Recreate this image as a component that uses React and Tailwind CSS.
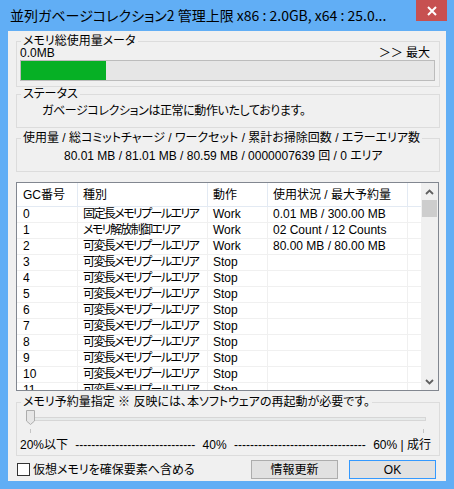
import React from 'react'

const rows = [
  ['0', '固定長メモリプールエリア', 'Work', '0.01 MB / 300.00 MB'],
  ['1', 'メモリ解放制御エリア', 'Work', '02 Count / 12 Counts'],
  ['2', '可変長メモリプールエリア', 'Work', '80.00 MB / 80.00 MB'],
  ['3', '可変長メモリプールエリア', 'Stop', ''],
  ['4', '可変長メモリプールエリア', 'Stop', ''],
  ['5', '可変長メモリプールエリア', 'Stop', ''],
  ['6', '可変長メモリプールエリア', 'Stop', ''],
  ['7', '可変長メモリプールエリア', 'Stop', ''],
  ['8', '可変長メモリプールエリア', 'Stop', ''],
  ['9', '可変長メモリプールエリア', 'Stop', ''],
  ['10', '可変長メモリプールエリア', 'Stop', ''],
  ['11', '可変長メモリプールエリア', 'Stop', ''],
]

function Legend({ children }) {
  return <legend className="ml-[4px] px-[2px] text-[12px] leading-[12px] text-black">{children}</legend>
}

function Chevron({ up }) {
  return (
    <svg width="9" height="6" viewBox="0 0 9 6">
      <path d={up ? 'M1 5 L4.5 1.5 L8 5' : 'M1 1 L4.5 4.5 L8 1'} fill="none" stroke="#606060" strokeWidth="1.8" />
    </svg>
  )
}

export default function App() {
  return (
    <div className="w-[454px] h-[489px] bg-[#61aef5] flex flex-col overflow-hidden font-['Liberation_Sans','Noto_Sans_CJK_JP',sans-serif] [font-feature-settings:'palt'] text-black">
      {/* title bar */}
      <div className="h-[31px] flex items-start shrink-0">
        <div className="pl-[10px] pt-[5px] text-[14px] leading-[20px] whitespace-nowrap font-['Noto_Sans_CJK_JP',sans-serif]">
          並列ガベージコレクション2 管理上限 x86 : 2.0GB, x64 : 25.0...
        </div>
        <div className="ml-auto mr-[7px] w-[31px] h-[21px] bg-[#c75050] flex items-center justify-center shrink-0">
          <svg width="10" height="10" viewBox="0 0 10 10">
            <path d="M1 1 L9 9 M9 1 L1 9" stroke="#fff" strokeWidth="2" />
          </svg>
        </div>
      </div>

      {/* client */}
      <div className="mx-[8px] mb-[8px] flex-1 min-w-0 bg-[#f0f0f0] flex flex-col pl-[8px] pr-[6px]">
        <fieldset className="mt-[4px] min-w-0 border border-[#dcdcdc] pb-[5px]">
          <Legend>メモリ総使用量メータ</Legend>
          <div className="h-[13px] flex justify-between items-center text-[12px] leading-[13px] pl-[3px] pr-[9px]">
            <span>0.0MB</span>
            <span>＞＞ 最大</span>
          </div>
          <div className="ml-[3px] mr-[4px] h-[21px] border border-[#bcbcbc] bg-[#e6e6e6]">
            <div className="h-full w-[85px] bg-[#06b025]" />
          </div>
        </fieldset>

        <fieldset className="mt-[1px] min-w-0 border border-[#dcdcdc] pb-[9px]">
          <Legend>ステータス</Legend>
          <div className="mt-[4px] pl-[25px] text-[12px] leading-[14px] tracking-[-0.4px]">ガベージコレクションは正常に動作いたしております。</div>
        </fieldset>

        <fieldset className="mt-[4px] min-w-0 border border-[#dcdcdc] pb-[8px]">
          <Legend>使用量 / 総コミットチャージ / ワークセット / 累計お掃除回数 / エラーエリア数</Legend>
          <div className="mt-[5px] pl-[47px] text-[12px] leading-[14px] whitespace-nowrap">
            80.01 MB / 81.01 MB / 80.59 MB / 0000007639 回 / 0 エリア
          </div>
        </fieldset>

        {/* list view */}
        <div className="mt-[10px] mr-[1px] h-[209px] border border-[#828790] bg-white flex overflow-hidden">
          <div className="flex-1 min-w-0 flex flex-col overflow-hidden text-[12px]">
            <div className="h-[24px] shrink-0 flex border-b border-[#e3eaf3]">
              <div className="w-[61px] shrink-0 border-r border-[#e3eaf3] pl-[6px] flex items-center">GC番号</div>
              <div className="w-[130px] shrink-0 border-r border-[#e3eaf3] pl-[5px] flex items-center">種別</div>
              <div className="w-[60px] shrink-0 border-r border-[#e3eaf3] pl-[5px] flex items-center">動作</div>
              <div className="w-[140px] shrink-0 border-r border-[#e3eaf3] pl-[5px] flex items-center">使用状況 / 最大予約量</div>
              <div className="flex-1" />
            </div>
            {rows.map((r) => (
              <div key={r[0]} className="h-[16px] shrink-0 flex border-b border-[#f0f0f0] leading-[15px] whitespace-nowrap">
                <div className="w-[61px] shrink-0 border-r border-[#f0f0f0] pl-[6px]">{r[0]}</div>
                <div className="w-[130px] shrink-0 border-r border-[#f0f0f0] pl-[5px] overflow-hidden tracking-[-1.6px]">{r[1]}</div>
                <div className="w-[60px] shrink-0 border-r border-[#f0f0f0] pl-[5px]">{r[2]}</div>
                <div className="w-[140px] shrink-0 border-r border-[#f0f0f0] pl-[5px]">{r[3]}</div>
                <div className="flex-1" />
              </div>
            ))}
          </div>
          <div className="w-[17px] shrink-0 bg-[#f0f0f0] flex flex-col">
            <div className="h-[17px] flex items-center justify-center">
              <Chevron up />
            </div>
            <div className="mx-[1px] h-[17px] bg-[#cdcdcd]" />
            <div className="flex-1" />
            <div className="h-[17px] flex items-center justify-center">
              <Chevron />
            </div>
          </div>
        </div>

        <fieldset className="mt-[5px] min-w-0 border border-[#dcdcdc] pb-[3px]">
          <Legend>メモリ予約量指定 ※ 反映には、本ソフトウェアの再起動が必要です。</Legend>
          <div className="relative h-[26px]">
            <div className="absolute left-[13px] right-[13px] top-[9px] h-[4px] border border-[#d6d6d6] bg-[#e7eaea]" />
            <svg className="absolute left-[9px] top-[2px]" width="9" height="15" viewBox="0 0 9 15">
              <path d="M0.5 0.5 H8.5 V11 L4.5 14.5 L0.5 11 Z" fill="#e6e6e6" stroke="#acacac" />
            </svg>
            <div className="absolute left-[13px] top-[21px] w-[1px] h-[4px] bg-[#c4c4c4]" />
            <div className="absolute right-[15px] top-[21px] w-[1px] h-[4px] bg-[#c4c4c4]" />
          </div>
          <div className="mt-[4px] h-[14px] flex justify-between items-center text-[12px] leading-[14px] pl-[3px] pr-[8px] whitespace-nowrap">
            <span>20%以下</span>
            <span>------------------------------</span>
            <span>40%</span>
            <span>---------------------------------</span>
            <span>60% | 成行</span>
          </div>
        </fieldset>

        <div className="mt-[4px] h-[19px] flex items-center text-[12px]">
          <div className="ml-[1px] w-[13px] h-[13px] border border-[#333] bg-white" />
          <span className="ml-[3px]">仮想メモリを確保要素へ含める</span>
          <div className="ml-auto w-[87px] h-[19px] border border-[#adadad] bg-[#e1e1e1] flex items-center justify-center">情報更新</div>
          <div className="ml-[11px] mr-[4px] w-[87px] h-[19px] border border-[#3399ff] bg-[#e1e1e1] flex items-center justify-center">OK</div>
        </div>
      </div>
    </div>
  )
}
